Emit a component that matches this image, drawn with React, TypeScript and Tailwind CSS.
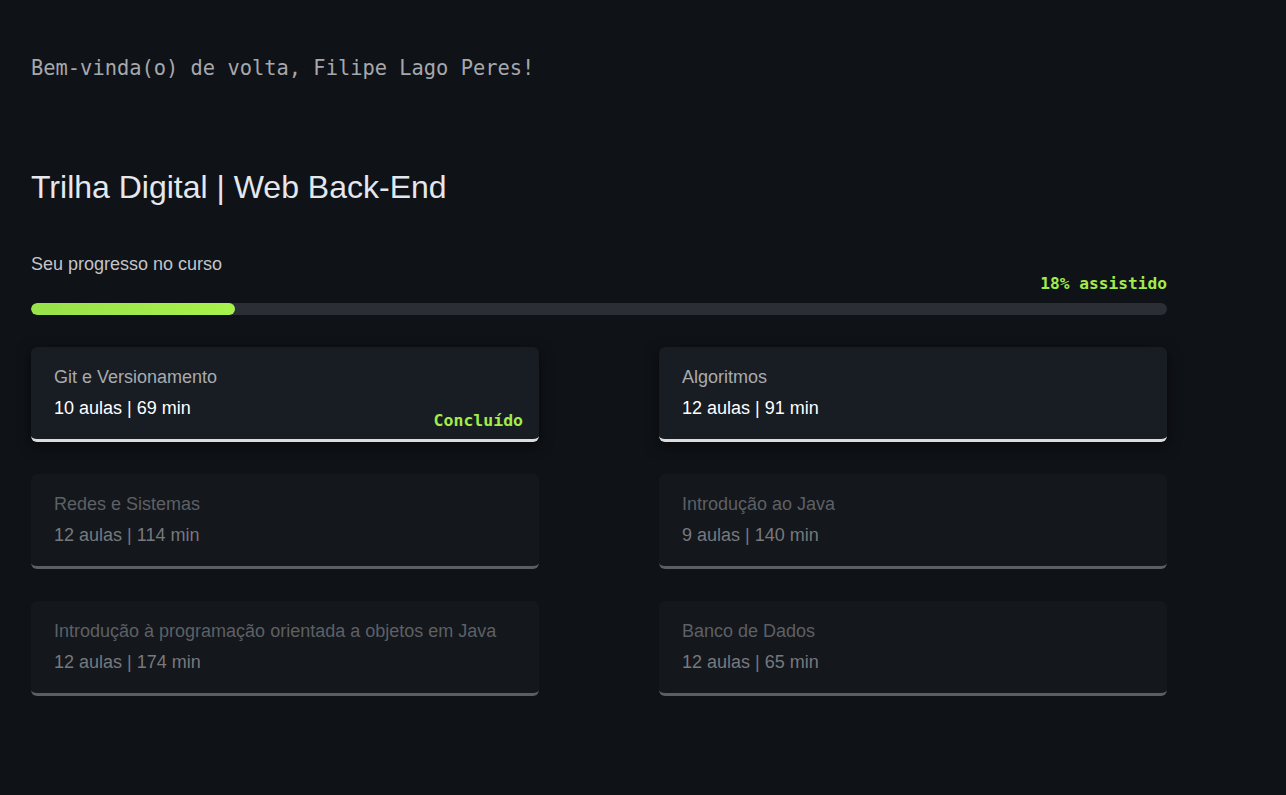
const modules = [
  { title: "Git e Versionamento", aulas: 10, min: 69, done: true, unlocked: true },
  { title: "Algoritmos", aulas: 12, min: 91, done: false, unlocked: true },
  { title: "Redes e Sistemas", aulas: 12, min: 114, done: false, unlocked: false },
  { title: "Introdução ao Java", aulas: 9, min: 140, done: false, unlocked: false },
  { title: "Introdução à programação orientada a objetos em Java", aulas: 12, min: 174, done: false, unlocked: false },
  { title: "Banco de Dados", aulas: 12, min: 65, done: false, unlocked: false },
];

const mono = "font-['DejaVu_Sans_Mono','Liberation_Mono',monospace]";
const sans = "font-['Liberation_Sans',Arial,sans-serif]";

function ModuleCard({ m }: { m: (typeof modules)[number] }) {
  return (
    <div
      className={
        "relative h-[95px] rounded-md border-b-[3px] px-[23px] pt-[19px] " +
        (m.unlocked
          ? "bg-[#181c23] border-[#dcdcdc] shadow-[0_4px_14px_rgba(0,0,0,0.55)]"
          : "bg-[#14171c] border-[#5c5e62]")
      }
    >
      <div className={"text-[18px] leading-[22px] " + (m.unlocked ? "text-[#a9abae]" : "text-[#5d6065]")}>
        {m.title}
      </div>
      <div className={"mt-[9px] text-[18px] leading-[22px] " + (m.unlocked ? "text-white" : "text-[#77797d]")}>
        {m.aulas} aulas | {m.min} min
      </div>
      {m.done && (
        <div className={`absolute right-[16px] bottom-[8px] text-[16.5px] leading-[20px] font-bold text-[#a3ec4a] ${mono}`}>
          Concluído
        </div>
      )}
    </div>
  );
}

export default function App() {
  const progress = 18;
  return (
    <div className={`min-h-screen w-full bg-[#0f1217] ${sans}`}>
      <div className="w-[1136px] ml-[31px] pt-[56px] pb-[90px]">
        <p className={`text-[20.4px] leading-[24px] text-[#a5a8ad] ${mono}`}>
          Bem-vinda(o) de volta, Filipe Lago Peres!
        </p>

        <h1 className="mt-[88px] text-[32px] leading-[38px] text-[#e4e8ee]">Trilha Digital | Web Back-End</h1>

        <div className="mt-[47px] text-[18px] leading-[22px] text-[#c3c5c8]">Seu progresso no curso</div>
        <div className={`-mt-[1px] text-right text-[16.2px] leading-[20px] font-bold text-[#a3ec4a] ${mono}`}>
          {progress}% assistido
        </div>
        <div className="mt-[9px] h-[12px] w-full rounded-full bg-[#2a2e35] overflow-hidden">
          <div
            className="h-full rounded-full bg-gradient-to-r from-[#98e24a] to-[#a8f24c]"
            style={{ width: `${progress}%` }}
          />
        </div>

        <div className="mt-[32px] grid grid-cols-2 gap-x-[120px] gap-y-[32px]">
          {modules.map((m) => (
            <ModuleCard key={m.title} m={m} />
          ))}
        </div>
      </div>
    </div>
  );
}
